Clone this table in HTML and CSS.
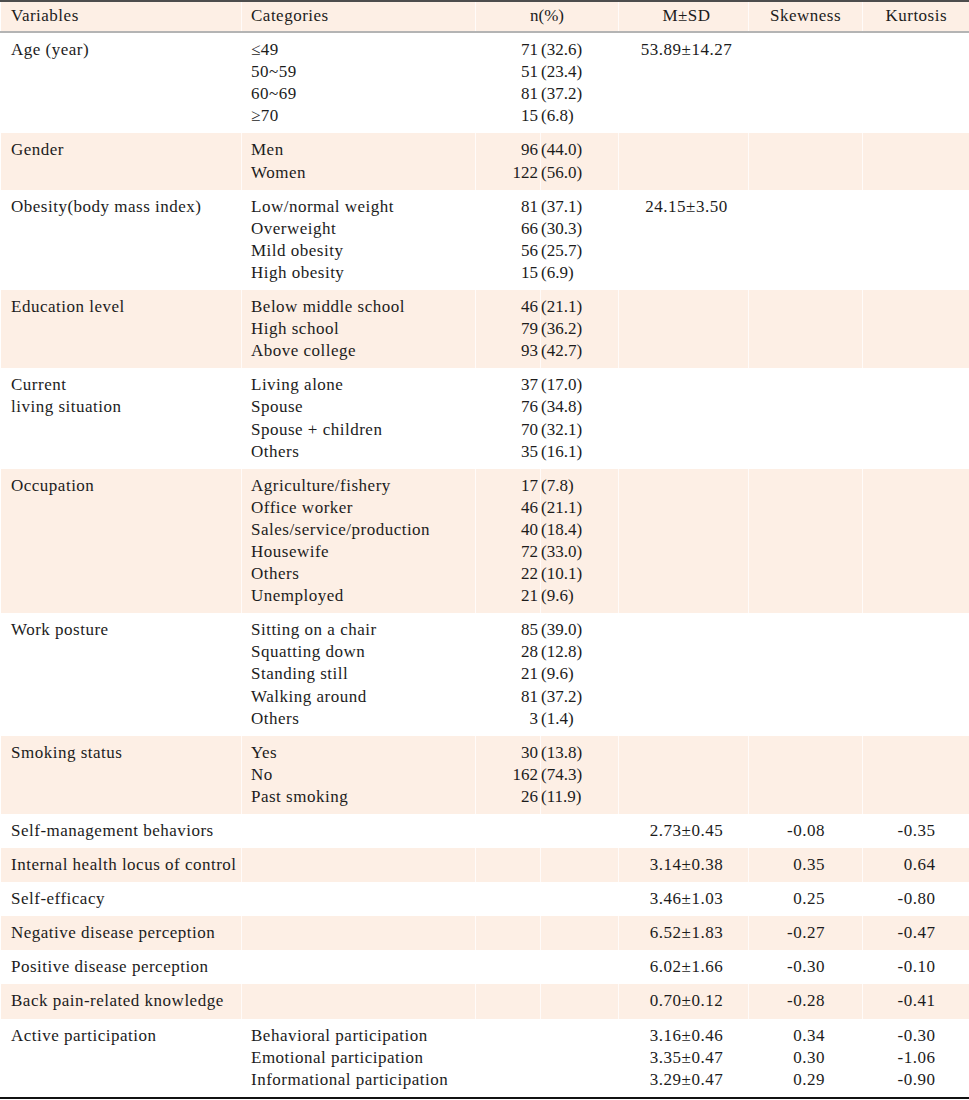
FILE: index.html
```html
<!DOCTYPE html>
<html lang="en">
<head>
<meta charset="utf-8">
<title>Table</title>
<link rel="stylesheet" href="styles.css">
</head>
<body>
<table class="stats">
  <colgroup>
    <col class="c-var"><col class="c-cat"><col class="c-n"><col class="c-pct"><col class="c-msd"><col class="c-skew"><col class="c-kurt">
  </colgroup>
  <thead>
    <tr>
      <th class="var">Variables</th>
      <th class="cat">Categories</th>
      <th class="npct" colspan="2">n(%)</th>
      <th class="msd">M±SD</th>
      <th class="skew">Skewness</th>
      <th class="kurt">Kurtosis</th>
    </tr>
  </thead>
  <tbody>
    <tr>
      <td class="var">Age (year)</td>
      <td class="cat"><div>≤49</div><div>50~59</div><div>60~69</div><div>≥70</div></td>
      <td class="n"><div>71</div><div>51</div><div>81</div><div>15</div></td>
      <td class="pct"><div>(32.6)</div><div>(23.4)</div><div>(37.2)</div><div>(6.8)</div></td>
      <td class="msd">53.89±14.27</td>
      <td class="skew"></td>
      <td class="kurt"></td>
    </tr>
    <tr class="alt">
      <td class="var">Gender</td>
      <td class="cat"><div>Men</div><div>Women</div></td>
      <td class="n"><div>96</div><div>122</div></td>
      <td class="pct"><div>(44.0)</div><div>(56.0)</div></td>
      <td class="msd"></td>
      <td class="skew"></td>
      <td class="kurt"></td>
    </tr>
    <tr>
      <td class="var">Obesity(body mass index)</td>
      <td class="cat"><div>Low/normal weight</div><div>Overweight</div><div>Mild obesity</div><div>High obesity</div></td>
      <td class="n"><div>81</div><div>66</div><div>56</div><div>15</div></td>
      <td class="pct"><div>(37.1)</div><div>(30.3)</div><div>(25.7)</div><div>(6.9)</div></td>
      <td class="msd">24.15±3.50</td>
      <td class="skew"></td>
      <td class="kurt"></td>
    </tr>
    <tr class="alt">
      <td class="var">Education level</td>
      <td class="cat"><div>Below middle school</div><div>High school</div><div>Above college</div></td>
      <td class="n"><div>46</div><div>79</div><div>93</div></td>
      <td class="pct"><div>(21.1)</div><div>(36.2)</div><div>(42.7)</div></td>
      <td class="msd"></td>
      <td class="skew"></td>
      <td class="kurt"></td>
    </tr>
    <tr>
      <td class="var">Current<br>living situation</td>
      <td class="cat"><div>Living alone</div><div>Spouse</div><div>Spouse + children</div><div>Others</div></td>
      <td class="n"><div>37</div><div>76</div><div>70</div><div>35</div></td>
      <td class="pct"><div>(17.0)</div><div>(34.8)</div><div>(32.1)</div><div>(16.1)</div></td>
      <td class="msd"></td>
      <td class="skew"></td>
      <td class="kurt"></td>
    </tr>
    <tr class="alt">
      <td class="var">Occupation</td>
      <td class="cat"><div>Agriculture/fishery</div><div>Office worker</div><div>Sales/service/production</div><div>Housewife</div><div>Others</div><div>Unemployed</div></td>
      <td class="n"><div>17</div><div>46</div><div>40</div><div>72</div><div>22</div><div>21</div></td>
      <td class="pct"><div>(7.8)</div><div>(21.1)</div><div>(18.4)</div><div>(33.0)</div><div>(10.1)</div><div>(9.6)</div></td>
      <td class="msd"></td>
      <td class="skew"></td>
      <td class="kurt"></td>
    </tr>
    <tr>
      <td class="var">Work posture</td>
      <td class="cat"><div>Sitting on a chair</div><div>Squatting down</div><div>Standing still</div><div>Walking around</div><div>Others</div></td>
      <td class="n"><div>85</div><div>28</div><div>21</div><div>81</div><div>3</div></td>
      <td class="pct"><div>(39.0)</div><div>(12.8)</div><div>(9.6)</div><div>(37.2)</div><div>(1.4)</div></td>
      <td class="msd"></td>
      <td class="skew"></td>
      <td class="kurt"></td>
    </tr>
    <tr class="alt">
      <td class="var">Smoking status</td>
      <td class="cat"><div>Yes</div><div>No</div><div>Past smoking</div></td>
      <td class="n"><div>30</div><div>162</div><div>26</div></td>
      <td class="pct"><div>(13.8)</div><div>(74.3)</div><div>(11.9)</div></td>
      <td class="msd"></td>
      <td class="skew"></td>
      <td class="kurt"></td>
    </tr>
    <tr>
      <td class="var">Self-management behaviors</td>
      <td class="cat"></td><td class="n"></td><td class="pct"></td>
      <td class="msd">2.73±0.45</td>
      <td class="skew">-0.08</td>
      <td class="kurt">-0.35</td>
    </tr>
    <tr class="alt">
      <td class="var">Internal health locus of control</td>
      <td class="cat"></td><td class="n"></td><td class="pct"></td>
      <td class="msd">3.14±0.38</td>
      <td class="skew">0.35</td>
      <td class="kurt">0.64</td>
    </tr>
    <tr>
      <td class="var">Self-efficacy</td>
      <td class="cat"></td><td class="n"></td><td class="pct"></td>
      <td class="msd">3.46±1.03</td>
      <td class="skew">0.25</td>
      <td class="kurt">-0.80</td>
    </tr>
    <tr class="alt">
      <td class="var">Negative disease perception</td>
      <td class="cat"></td><td class="n"></td><td class="pct"></td>
      <td class="msd">6.52±1.83</td>
      <td class="skew">-0.27</td>
      <td class="kurt">-0.47</td>
    </tr>
    <tr>
      <td class="var">Positive disease perception</td>
      <td class="cat"></td><td class="n"></td><td class="pct"></td>
      <td class="msd">6.02±1.66</td>
      <td class="skew">-0.30</td>
      <td class="kurt">-0.10</td>
    </tr>
    <tr class="alt">
      <td class="var">Back pain-related knowledge</td>
      <td class="cat"></td><td class="n"></td><td class="pct"></td>
      <td class="msd">0.70±0.12</td>
      <td class="skew">-0.28</td>
      <td class="kurt">-0.41</td>
    </tr>
    <tr class="last">
      <td class="var">Active participation</td>
      <td class="cat"><div>Behavioral participation</div><div>Emotional participation</div><div>Informational participation</div></td>
      <td class="n"></td><td class="pct"></td>
      <td class="msd"><div>3.16±0.46</div><div>3.35±0.47</div><div>3.29±0.47</div></td>
      <td class="skew"><div>0.34</div><div>0.30</div><div>0.29</div></td>
      <td class="kurt"><div>-0.30</div><div>-1.06</div><div>-0.90</div></td>
    </tr>
  </tbody>
</table>
</body>
</html>
```

FILE: styles.css
```css
html, body {
  margin: 0;
  padding: 0;
  background: #ffffff;
}

body {
  font-family: "Liberation Serif", "DejaVu Serif", serif;
  font-size: 17px;
  letter-spacing: 0.5px;
  color: #1c1c1c;
}

.stats {
  width: 969px;
  table-layout: fixed;
  border-collapse: collapse;
  border-top: 2px solid #4d4d4d;
  font-family: "Liberation Serif", "DejaVu Serif", serif;
}

.c-var { width: 241px; }
.c-cat { width: 234px; }
.c-n { width: 65px; }
.c-pct { width: 78px; }
.c-msd { width: 130px; }
.c-skew { width: 114px; }
.c-kurt { width: 107px; }

.stats th,
.stats td {
  font-family: "Liberation Serif", "DejaVu Serif", serif;
  line-height: 22.1px;
  vertical-align: top;
  white-space: nowrap;
  font-weight: normal;
  border-left: 1px solid rgba(255, 255, 255, 0.75);
}

.stats th {
  background: #fdefe5;
  padding: 3px 0 4px;
  border-bottom: 2px solid #b4b4b4;
}

.stats td {
  padding: 6px 0;
}

.stats tr.alt td {
  background: #fdefe5;
}

.stats tr.last td {
  border-bottom: 2px solid #111111;
}

.stats .var {
  text-align: left;
  padding-left: 10px;
}

.stats .cat {
  text-align: left;
  padding-left: 9px;
}

.stats .npct {
  text-align: center;
  letter-spacing: 0;
}

.stats td.n {
  text-align: right;
  padding-right: 2px;
  letter-spacing: 0;
}

.stats td.pct {
  text-align: left;
  padding-left: 0;
  letter-spacing: 0;
}

.stats .msd {
  text-align: center;
  padding-left: 6px;
}

.stats th.skew,
.stats th.kurt {
  text-align: center;
}

.stats td.skew {
  text-align: right;
  padding-right: 37px;
}

.stats td.kurt {
  text-align: right;
  padding-right: 34px;
}
```
